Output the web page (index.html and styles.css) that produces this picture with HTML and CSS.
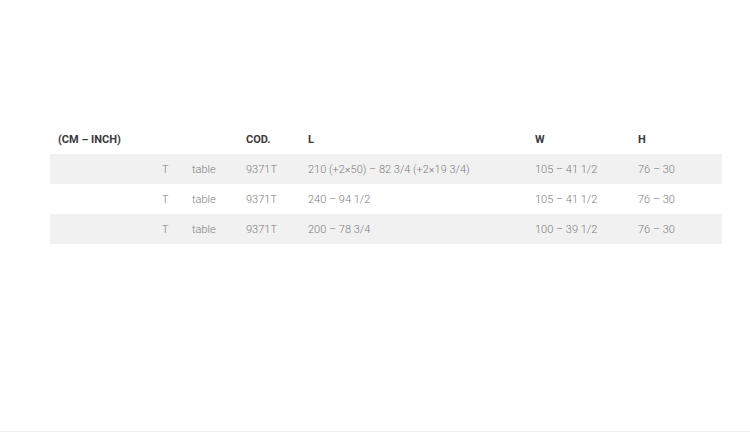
FILE: index.html
```html
<!DOCTYPE html>
<html>
<head>
<meta charset="utf-8">
<link rel="stylesheet" href="styles.css">
</head>
<body>
<div class="page">
  <table class="specs">
    <colgroup>
      <col class="c1"><col class="c2"><col class="c3"><col class="c4"><col class="c5"><col class="c6"><col class="c7">
    </colgroup>
    <thead>
      <tr><th>(CM – INCH)</th><th></th><th></th><th>COD.</th><th>L</th><th>W</th><th>H</th></tr>
    </thead>
    <tbody>
      <tr><td></td><td>T</td><td>table</td><td>9371T</td><td>210 (+2×50) – 82 3/4 (+2×19 3/4)</td><td>105 – 41 1/2</td><td>76 – 30</td></tr>
      <tr><td></td><td>T</td><td>table</td><td>9371T</td><td>240 – 94 1/2</td><td>105 – 41 1/2</td><td>76 – 30</td></tr>
      <tr><td></td><td>T</td><td>table</td><td>9371T</td><td>200 – 78 3/4</td><td>100 – 39 1/2</td><td>76 – 30</td></tr>
    </tbody>
  </table>
</div>
</body>
</html>
```
FILE: styles.css
```css
html, body { margin: 0; padding: 0; background: #fff; }
body { font-family: Roboto, "Liberation Sans", sans-serif; }
.page {
  box-sizing: border-box;
  height: 432px;
  padding: 124px 28px 0 50px;
  border-bottom: 1px solid #efefef;
}
.specs {
  width: 672px;
  table-layout: fixed;
  border-collapse: collapse;
  font-size: 11px;
}
.c1 { width: 104px; } .c2 { width: 30px; } .c3 { width: 54px; } .c4 { width: 62px; }
.c5 { width: 227px; } .c6 { width: 103px; } .c7 { width: 92px; }
.specs th, .specs td {
  height: 30px;
  padding: 0 0 0 8px;
  text-align: left;
  white-space: nowrap;
  box-sizing: border-box;
}
.specs th { font-weight: 700; color: #3a3a3a; }
.specs td { font-weight: 300; color: #7d7d7d; }
.specs tbody tr:nth-child(odd) { background: #f1f1f1; }
```
